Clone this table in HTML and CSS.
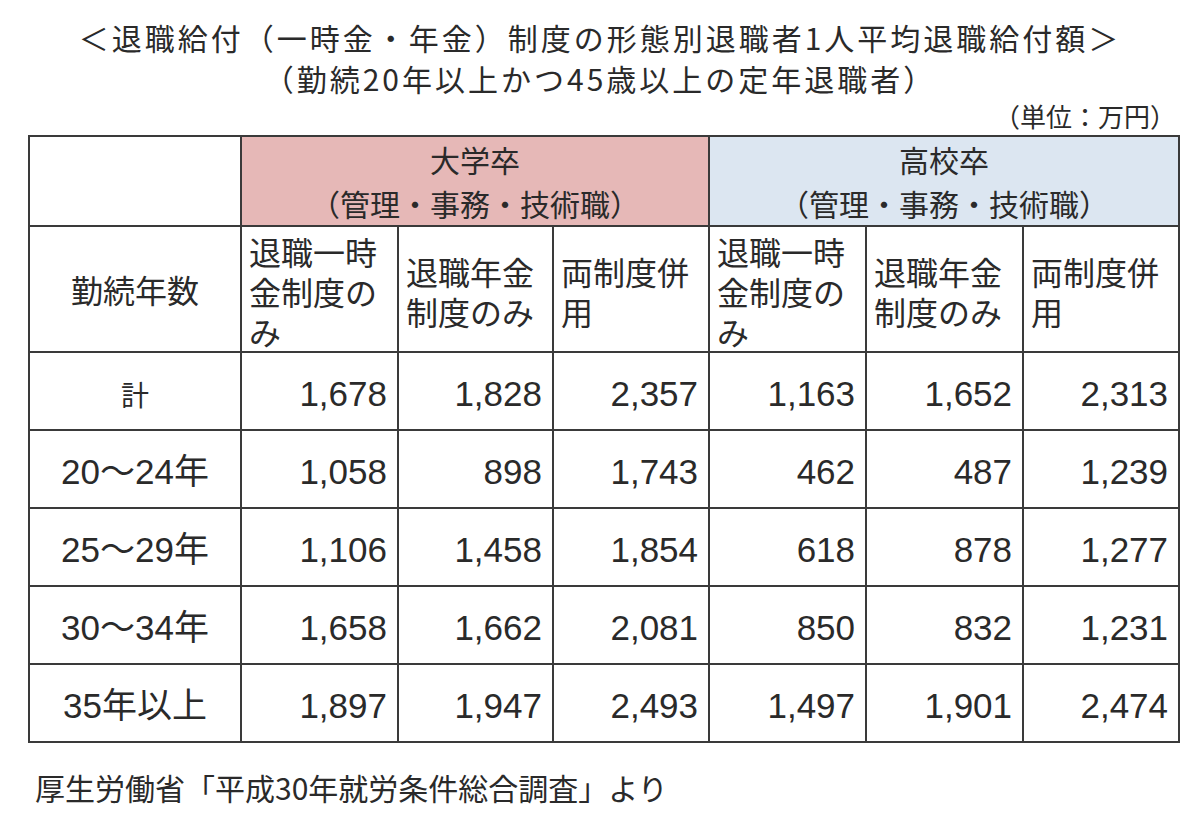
FILE: index.html
```html
<!DOCTYPE html>
<html lang="ja">
<head>
<meta charset="utf-8">
<title>退職給付額</title>
<link rel="stylesheet" href="styles.css">
</head>
<body>
<div class="page">
  <div class="title">
    <p>＜退職給付（一時金・年金）制度の形態別退職者1人平均退職給付額＞</p>
    <p>（勤続20年以上かつ45歳以上の定年退職者）</p>
  </div>
  <div class="unit">（単位：万円）</div>
  <table class="tbl">
    <colgroup>
      <col class="c0"><col class="c1"><col class="c2"><col class="c3"><col class="c4"><col class="c5"><col class="c6">
    </colgroup>
    <tr class="r-grp">
      <th class="blank"></th>
      <th class="grp pink" colspan="3">大学卒<br>（管理・事務・技術職）</th>
      <th class="grp blue" colspan="3">高校卒<br>（管理・事務・技術職）</th>
    </tr>
    <tr class="r-sub">
      <th class="head0">勤続年数</th>
      <th class="sub">退職一時<br>金制度の<br>み</th>
      <th class="sub">退職年金<br>制度のみ</th>
      <th class="sub">両制度併<br>用</th>
      <th class="sub">退職一時<br>金制度の<br>み</th>
      <th class="sub">退職年金<br>制度のみ</th>
      <th class="sub">両制度併<br>用</th>
    </tr>
    <tr class="r-a">
      <td class="lbl small">計</td>
      <td class="num">1,678</td><td class="num">1,828</td><td class="num">2,357</td>
      <td class="num">1,163</td><td class="num">1,652</td><td class="num">2,313</td>
    </tr>
    <tr class="r-b">
      <td class="lbl">20～24年</td>
      <td class="num">1,058</td><td class="num">898</td><td class="num">1,743</td>
      <td class="num">462</td><td class="num">487</td><td class="num">1,239</td>
    </tr>
    <tr class="r-a">
      <td class="lbl">25～29年</td>
      <td class="num">1,106</td><td class="num">1,458</td><td class="num">1,854</td>
      <td class="num">618</td><td class="num">878</td><td class="num">1,277</td>
    </tr>
    <tr class="r-b">
      <td class="lbl">30～34年</td>
      <td class="num">1,658</td><td class="num">1,662</td><td class="num">2,081</td>
      <td class="num">850</td><td class="num">832</td><td class="num">1,231</td>
    </tr>
    <tr class="r-a">
      <td class="lbl">35年以上</td>
      <td class="num">1,897</td><td class="num">1,947</td><td class="num">2,493</td>
      <td class="num">1,497</td><td class="num">1,901</td><td class="num">2,474</td>
    </tr>
  </table>
  <p class="source">厚生労働省「平成30年就労条件総合調査」より</p>
</div>
</body>
</html>
```

FILE: styles.css
```css
html, body {
  margin: 0;
  padding: 0;
  background: #ffffff;
}
body {
  color: #2a2a2a;
  font-family: "Noto Sans CJK JP", sans-serif;
}
.page {
  width: 1200px;
  height: 816px;
  overflow: hidden;
}
.title {
  padding-top: 17px;
  text-align: center;
  font-size: 30px;
  line-height: 41px;
  letter-spacing: 3px;
}
.title p {
  margin: 0;
  white-space: nowrap;
}
.unit {
  text-align: right;
  font-size: 26px;
  line-height: 34px;
  height: 34px;
  padding-right: 24px;
  margin-bottom: 2px;
}
.tbl {
  margin-left: 28px;
  width: 1150px;
  border-collapse: collapse;
  table-layout: fixed;
}
.c0 { width: 212px; }
.c1 { width: 157px; }
.c2 { width: 155px; }
.c3 { width: 156px; }
.c4 { width: 157px; }
.c5 { width: 157px; }
.c6 { width: 156px; }
.tbl th,
.tbl td {
  border: 2px solid #3a3a3a;
  padding: 0;
  font-weight: normal;
}
.r-grp { height: 86px; }
.r-sub { height: 124px; }
.r-a { height: 78px; }
.r-b { height: 78px; }
.tbl .grp {
  font-size: 30px;
  line-height: 44px;
  text-align: center;
  vertical-align: middle;
}
.tbl .pink { background: #e6b8b7; }
.tbl .blue { background: #dce6f1; }
.tbl .head0 {
  font-size: 32px;
  text-align: center;
  vertical-align: middle;
}
.tbl .sub {
  font-size: 32px;
  line-height: 40px;
  text-align: left;
  vertical-align: middle;
  padding: 4px 0 0 7px;
  white-space: nowrap;
}
.tbl .lbl {
  font-family: "Liberation Sans", "Noto Sans CJK JP", sans-serif;
  font-size: 35px;
  line-height: 40px;
  text-align: center;
  padding-top: 6px;
}
.tbl .lbl.small {
  font-family: "Noto Sans CJK JP", sans-serif;
  font-size: 28px;
}
.tbl .num {
  font-family: "Liberation Sans", sans-serif;
  font-size: 35px;
  line-height: 40px;
  text-align: right;
  padding: 6px 10px 0 0;
}
.source {
  margin: 24px 0 0 35px;
  font-size: 30px;
  line-height: 40px;
  white-space: nowrap;
}
```
